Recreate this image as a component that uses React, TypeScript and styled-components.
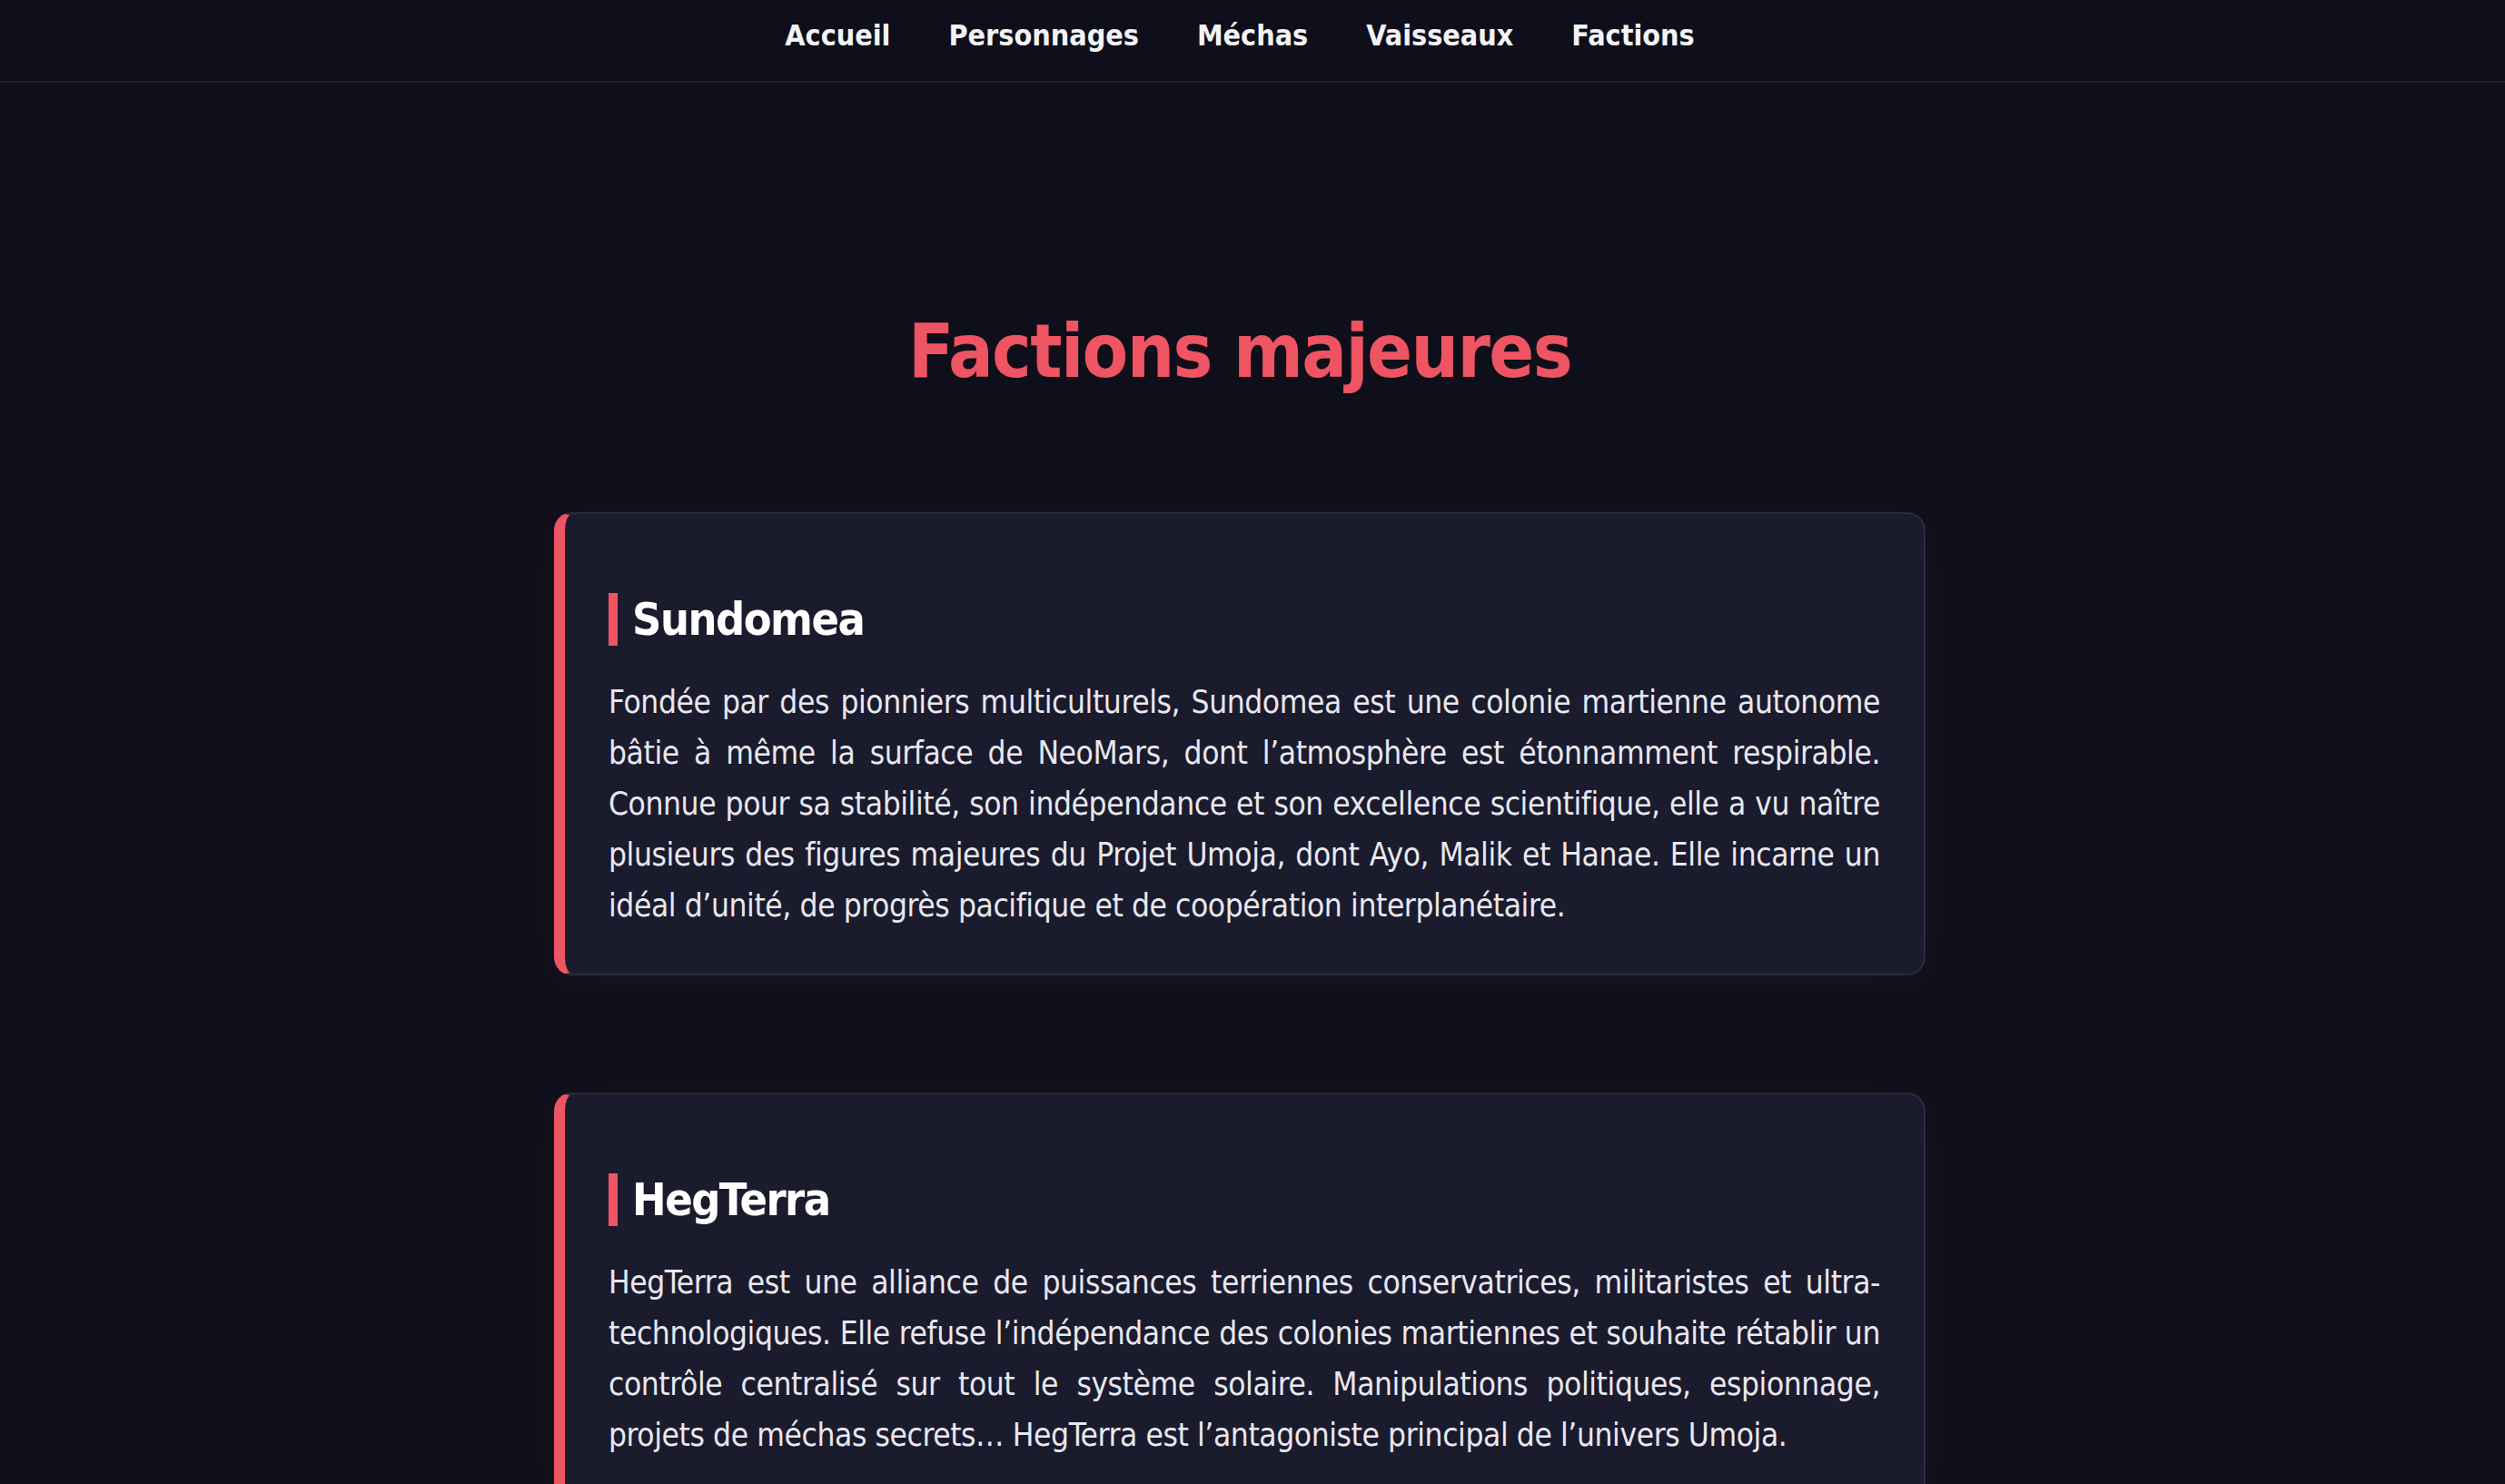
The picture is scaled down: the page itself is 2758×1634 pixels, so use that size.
import React from "react";
import styled, { createGlobalStyle } from "styled-components";

const GlobalStyle = createGlobalStyle`
  html, body {
    margin: 0;
    padding: 0;
    background: #0e0f1a;
  }
  body {
    font-family: "DejaVu Sans Condensed", "DejaVu Sans", Verdana, sans-serif;
    color: #e8e8ee;
  }
`;

const Page = styled.div`
  min-height: 100vh;
  background: #0e0f1a;
`;

const NavBar = styled.nav`
  height: 89px;
  box-sizing: content-box;
  padding-right: 28px;
  border-bottom: 2px solid #222226;
  display: flex;
  justify-content: center;
  align-items: center;
  gap: 64px;
`;

const NavLink = styled.a`
  font-size: 32px;
  font-weight: 700;
  color: #f3f3f6;
  text-decoration: none;
  line-height: 1;
  padding-bottom: 11px;
`;

const Main = styled.main`
  display: flex;
  flex-direction: column;
  align-items: center;
  padding-top: 247px;
  padding-right: 28px;
`;

const Title = styled.h1`
  margin: 0 0 128px;
  font-size: 82px;
  line-height: 98px;
  letter-spacing: -1.6px;
  font-weight: 700;
  color: #ee5462;
  text-align: center;
`;

const CardList = styled.div`
  width: 1510px;
  display: flex;
  flex-direction: column;
  gap: 129px;
`;

const Card = styled.section`
  background: #1b1b2e;
  border: 2px solid #2b2a3f;
  border-left: 12px solid #ee5462;
  border-radius: 20px;
  padding: 87px 48px 47px 48px;
  box-shadow: 0 6px 40px rgba(239, 83, 97, 0.07);
`;

const CardTitle = styled.h2`
  margin: 0 0 34px;
  font-size: 50px;
  line-height: 58px;
  letter-spacing: -1.5px;
  font-weight: 700;
  color: #ffffff;
  border-left: 10px solid #ee5462;
  padding-left: 16px;
`;

const CardText = styled.p`
  margin: 0;
  font-size: 35px;
  line-height: 56px;
  letter-spacing: -0.4px;
  color: #e8e8ee;
  text-align: justify;
`;

const navItems = ["Accueil", "Personnages", "Méchas", "Vaisseaux", "Factions"];

const factions = [
  {
    name: "Sundomea",
    text: "Fondée par des pionniers multiculturels, Sundomea est une colonie martienne autonome bâtie à même la surface de NeoMars, dont l’atmosphère est étonnamment respirable. Connue pour sa stabilité, son indépendance et son excellence scientifique, elle a vu naître plusieurs des figures majeures du Projet Umoja, dont Ayo, Malik et Hanae. Elle incarne un idéal d’unité, de progrès pacifique et de coopération interplanétaire.",
  },
  {
    name: "HegTerra",
    text: "HegTerra est une alliance de puissances terriennes conservatrices, militaristes et ultra-technologiques. Elle refuse l’indépendance des colonies martiennes et souhaite rétablir un contrôle centralisé sur tout le système solaire. Manipulations politiques, espionnage, projets de méchas secrets… HegTerra est l’antagoniste principal de l’univers Umoja.",
  },
];

export default function App() {
  return (
    <Page>
      <GlobalStyle />
      <NavBar>
        {navItems.map((item) => (
          <NavLink key={item} href="#">
            {item}
          </NavLink>
        ))}
      </NavBar>
      <Main>
        <Title>Factions majeures</Title>
        <CardList>
          {factions.map((f) => (
            <Card key={f.name}>
              <CardTitle>{f.name}</CardTitle>
              <CardText>{f.text}</CardText>
            </Card>
          ))}
        </CardList>
      </Main>
    </Page>
  );
}
